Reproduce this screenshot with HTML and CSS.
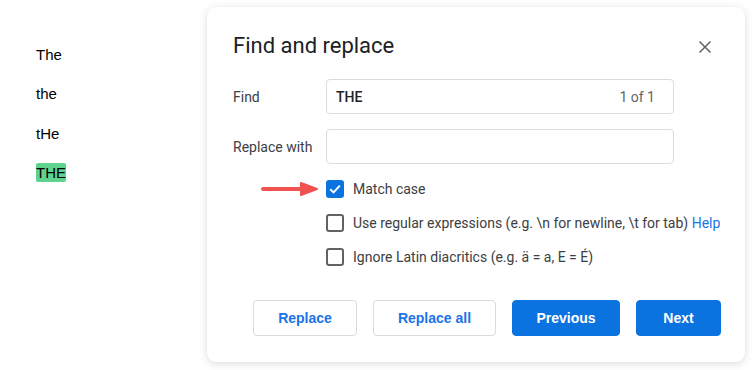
FILE: index.html
```html
<!DOCTYPE html>
<html>
<head>
<meta charset="utf-8">
<link rel="stylesheet" href="styles.css">
</head>
<body>
<div class="page">
  <div class="doc">
    <p class="line">The</p>
    <p class="line">the</p>
    <p class="line">tHe</p>
    <p class="line"><span class="hit">THE</span></p>
  </div>
  <div class="dialog">
    <div class="head">
      <h1 class="title">Find and replace</h1>
      <svg class="close" width="14" height="14" viewBox="0 0 14 14"><path d="M1.5 1.5L12.5 12.5M12.5 1.5L1.5 12.5" stroke="#5f6368" stroke-width="1.5" fill="none"/></svg>
    </div>
    <div class="field">
      <label class="label">Find</label>
      <div class="input"><span class="query">THE</span><span class="count">1 of 1</span></div>
    </div>
    <div class="field">
      <label class="label">Replace with</label>
      <div class="input"></div>
    </div>
    <div class="options">
      <div class="opt">
        <svg class="arrow" width="58" height="14" viewBox="0 0 58 14"><path d="M2 7H44" stroke="#f0524f" stroke-width="4" stroke-linecap="round"/><path d="M40 1L56 7L40 13Z" fill="#f0524f" stroke="#f0524f" stroke-width="2" stroke-linejoin="round"/></svg>
        <span class="box checked"><svg width="18" height="18" viewBox="0 0 18 18"><path d="M4.2 9.2L7.6 12.4L13.8 5.6" stroke="#fff" stroke-width="2" fill="none"/></svg></span>
        <span class="opt-text">Match case</span>
      </div>
      <div class="opt">
        <span class="box"></span>
        <span class="opt-text">Use regular expressions (e.g. \n for newline, \t for tab) <a class="help">Help</a></span>
      </div>
      <div class="opt">
        <span class="box"></span>
        <span class="opt-text">Ignore Latin diacritics (e.g. ä = a, E = É)</span>
      </div>
    </div>
    <div class="actions">
      <button class="btn outline w-replace">Replace</button>
      <button class="btn outline w-all">Replace all</button>
      <button class="btn solid w-prev">Previous</button>
      <button class="btn solid w-next">Next</button>
    </div>
  </div>
</div>
</body>
</html>
```
FILE: styles.css
```css
* { box-sizing: border-box; }
html, body { margin: 0; padding: 0; background: #fff; }
body { width: 756px; height: 370px; overflow: hidden; font-family: Roboto, "Liberation Sans", sans-serif; }
.page { display: flex; align-items: flex-start; }
.doc { width: 207px; padding: 45px 0 0 36px; font-family: "Liberation Sans", Arial, sans-serif; font-size: 15px; color: #000; }
.line { margin: 0 0 20.3px 0; height: 19px; line-height: 19px; }
.hit { background: #5fd38d; border-radius: 2px; padding: 1px 0; }
.dialog { margin-top: 7px; width: 538px; height: 355px; background: #fff; border-radius: 9px; box-shadow: 0 2px 10px rgba(0,0,0,0.13), 0 0 2px rgba(0,0,0,0.05); padding: 30px 24px 0 26px; }
.head { display: flex; justify-content: space-between; align-items: center; height: 18px; margin-bottom: 24px; }
.title { margin: 0; font-weight: 400; font-size: 22px; color: #202124; line-height: 18px; }
.close { margin-right: 9px; margin-top: 2px; }
.field { display: flex; align-items: center; margin-bottom: 15px; }
.label { width: 93px; font-size: 14px; color: #3c4043; }
.input { width: 348px; height: 35px; border: 1px solid #dadce0; border-radius: 4px; display: flex; align-items: center; justify-content: space-between; padding: 0 18px 0 9px; }
.query { font-size: 14px; font-weight: 500; color: #202124; }
.count { font-size: 14px; color: #5f6368; }
.options { padding-left: 93px; padding-top: 0; }
.opt { display: flex; align-items: center; height: 19px; margin-bottom: 15px; position: relative; }
.arrow { position: absolute; left: -65px; top: 3px; }
.box { width: 18px; height: 18px; border: 2px solid #5f6368; border-radius: 3px; flex: none; margin-right: 9px; display: flex; }
.box.checked { background: #0b73e0; border-color: #0b73e0; }
.box.checked svg { margin: -2px; }
.opt-text { font-size: 14px; color: #3c4043; }
.help { color: #1a73e8; }
.actions { display: flex; justify-content: flex-end; gap: 16px; margin-top: 34px; }
.btn { height: 36px; border-radius: 4px; font-family: "Liberation Sans", Arial, sans-serif; font-weight: 700; font-size: 14px; }
.outline { background: #fff; border: 1px solid #dadce0; color: #1a73e8; }
.solid { background: #0b73e0; border: 1px solid #0b73e0; color: #fff; }
.w-replace { width: 104px; }
.w-all { width: 123px; }
.w-prev { width: 108px; }
.w-next { width: 85px; }
```
